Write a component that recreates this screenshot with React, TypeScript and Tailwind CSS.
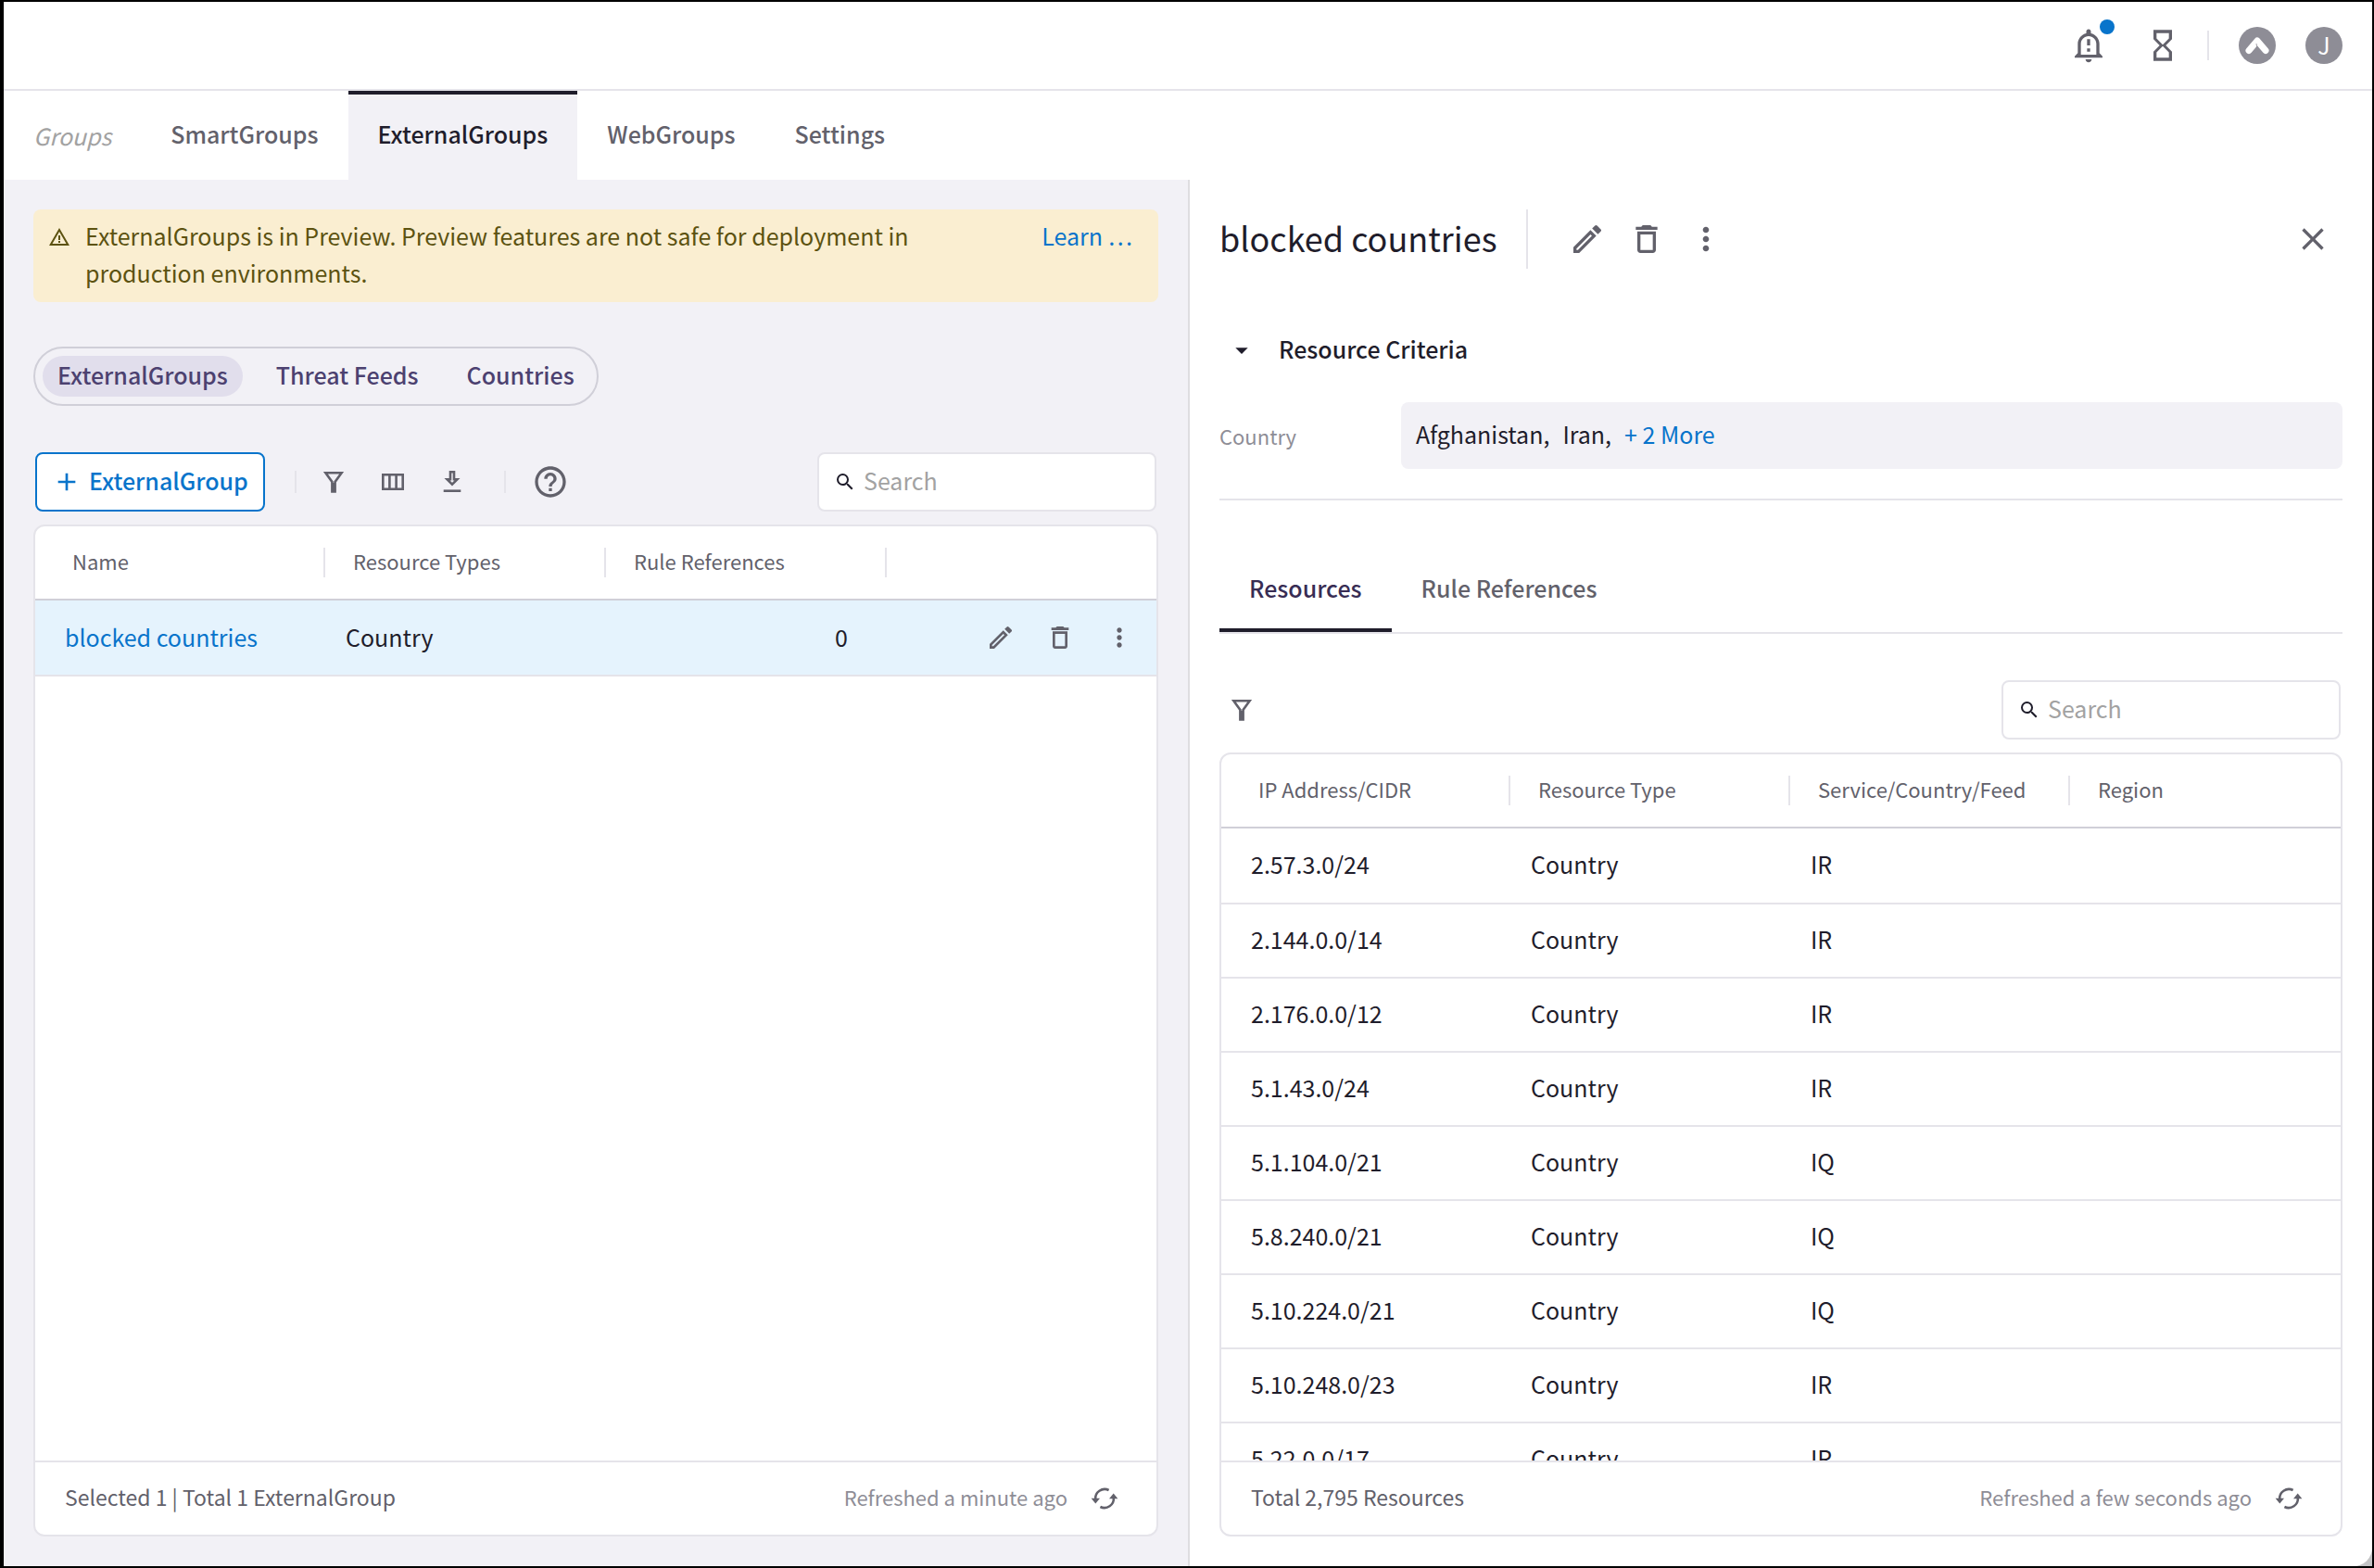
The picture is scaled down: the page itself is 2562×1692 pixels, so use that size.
import React from 'react';
import {
  MdAdd,
  MdArrowDropDown,
  MdClose,
  MdDeleteOutline,
  MdHelpOutline,
  MdHourglassEmpty,
  MdMoreVert,
  MdOutlineModeEdit,
  MdOutlineNotificationImportant,
  MdSearch,
  MdWarningAmber,
} from 'react-icons/md';

const resources = [
  { cidr: '2.57.3.0/24', type: 'Country', feed: 'IR' },
  { cidr: '2.144.0.0/14', type: 'Country', feed: 'IR' },
  { cidr: '2.176.0.0/12', type: 'Country', feed: 'IR' },
  { cidr: '5.1.43.0/24', type: 'Country', feed: 'IR' },
  { cidr: '5.1.104.0/21', type: 'Country', feed: 'IQ' },
  { cidr: '5.8.240.0/21', type: 'Country', feed: 'IQ' },
  { cidr: '5.10.224.0/21', type: 'Country', feed: 'IQ' },
  { cidr: '5.10.248.0/23', type: 'Country', feed: 'IR' },
  { cidr: '5.22.0.0/17', type: 'Country', feed: 'IR' },
];

const FilterIcon = () => (
  <svg viewBox="0 0 32 32" className="size-8" fill="none" stroke="currentColor" strokeWidth="2.6">
    <path d="M7.4 6.3h17.2L17.6 16v10.4h-3.2V16z" />
    <path d="M16 17v9" />
  </svg>
);

const ColumnsIcon = () => (
  <svg viewBox="0 0 32 32" className="size-8" fill="none" stroke="currentColor" strokeWidth="2.6">
    <path d="M5.3 8.3h21.4v15.4H5.3zM12.4 8.3v15.4M19.6 8.3v15.4" />
  </svg>
);

const DownloadIcon = () => (
  <svg viewBox="0 0 32 32" className="size-8" fill="none" stroke="currentColor" strokeWidth="2.6">
    <path d="M14 5.3h4v8h3.4L16 18.7l-5.4-5.4H14z" />
    <path d="M6.7 25.7h18.6" />
  </svg>
);

const RefreshIcon = () => (
  <svg viewBox="0 0 32 32" className="size-8" fill="none" stroke="currentColor" strokeWidth="2.6">
    <path d="M20.6 7A10 10 0 0 0 6.2 17" />
    <path d="M11.4 25A10 10 0 0 0 25.8 15" />
    <path d="M1.600 15.800h9.400l-4.700 5.600zM30.400 16.200H21l4.700-5.600z" fill="currentColor" stroke="none" />
  </svg>
);

const LogoIcon = () => (
  <svg viewBox="0 0 40 40" className="size-10">
    <circle cx="20" cy="20" r="20" fill="#8e8d96" />
    <path d="M11 25.5l9-10.5 9 10.5" fill="none" stroke="#fff" strokeWidth="7" strokeLinecap="round" strokeLinejoin="round" />
    <path d="M19 18l1 5" stroke="#8e8d96" strokeWidth="0.8" />
  </svg>
);

const IconButton = ({ label, children }: { label: string; children: React.ReactNode }) => (
  <button type="button" aria-label={label} className="flex size-16 items-center justify-center text-[#62616b]">
    {children}
  </button>
);

const SearchBox = ({ id }: { id: string }) => (
  <div className="mr-0.5 flex h-16 w-[366px] items-center gap-2 rounded-lg border-2 border-[#e5e4ea] bg-white pl-4">
    <label htmlFor={id} aria-label="Search">
      <MdSearch className="size-6 text-[#1f1d2b]" />
    </label>
    <input id={id} type="text" placeholder="Search" className="min-w-0 flex-1 pb-1 outline-none placeholder:text-[#a2a2a2]" />
  </div>
);

const HeaderCell = ({ first, children }: { first?: boolean; children?: React.ReactNode }) => (
  <th scope="col" className="h-[79px] p-0 text-left text-[22px] font-normal text-[#62616b]">
    <div className={first ? 'flex h-8 items-center pb-1 pl-10' : 'ml-2 flex h-8 items-center border-l-2 border-[#e5e4ea] pb-1 pl-[30px]'}>
      {children}
    </div>
  </th>
);

const Footer = ({ summary, refreshed }: { summary: string; refreshed: string }) => (
  <footer className="flex h-20 shrink-0 items-center border-t-2 border-[#e5e4ea] pl-8 pr-10 text-[#62616b]">
    <span className="pb-1 text-[23px]">{summary}</span>
    <span className="ml-auto pb-1 text-[22px] text-[#8e8d96]">{refreshed}</span>
    <button type="button" aria-label="Refresh" className="ml-6 flex size-8 items-center justify-center">
      <RefreshIcon />
    </button>
  </footer>
);

const TopBar = () => (
  <header className="flex h-24 shrink-0 items-center justify-end border-b-2 border-[#e5e4ea] pr-8 text-[#62616b]">
    <button type="button" aria-label="Notifications" className="relative mr-10 flex size-10 items-center justify-center">
      <MdOutlineNotificationImportant className="size-10" />
      <span className="absolute -right-2 -top-2 size-4 rounded-full bg-[#0874cb]" />
    </button>
    <button type="button" aria-label="Tasks" className="mr-7 flex size-10 items-center justify-center">
      <MdHourglassEmpty className="size-10" />
    </button>
    <span className="mr-8 h-8 w-0.5 bg-[#e5e4ea]" />
    <button type="button" aria-label="Products" className="mr-8">
      <LogoIcon />
    </button>
    <button type="button" className="flex size-10 items-center justify-center rounded-full bg-[#8e8d96] pb-0.5 text-[25px] text-white">
      J
    </button>
  </header>
);

const GroupTabs = () => (
  <nav className="flex h-24 shrink-0 items-stretch font-medium text-[#62616b]">
    <span className="flex items-center px-8 font-normal italic text-[#a2a2a2]">Groups</span>
    <a href="#smart" className="flex items-center px-8 pb-1">SmartGroups</a>
    <a href="#external" className="flex items-center border-t-4 border-[#1f1d2b] bg-[#f2f1f6] px-8 pb-2 text-[#1f1d2b]">
      ExternalGroups
    </a>
    <a href="#web" className="flex items-center px-8 pb-1">WebGroups</a>
    <a href="#settings" className="flex items-center px-8 pb-1">Settings</a>
  </nav>
);

const GroupsPanel = () => (
  <section className="flex w-[calc(50%+2px)] shrink-0 flex-col border-r-2 border-[#dedde0] bg-[#f2f1f6] p-8">
    <div className="flex h-[100px] shrink-0 rounded-lg bg-[#faeed1] pl-4 pr-7 pt-2 leading-10 text-[#5c5210]">
      <MdWarningAmber className="mr-4 mt-2.5 size-6 shrink-0" />
      <p className="w-[920px]">
        ExternalGroups is in Preview. Preview features are not safe for deployment in production environments.
      </p>
      <a href="#learn" className="ml-auto whitespace-nowrap text-[#0874cb]">Learn …</a>
    </div>

    <div className="mt-12 flex h-16 shrink-0 items-center gap-5 self-start rounded-full border-2 border-[#d0cfd8] px-2 font-medium text-[#4c4170]">
      <button type="button" className="h-11 rounded-full bg-[#e1deec] px-4 pb-1">ExternalGroups</button>
      <button type="button" className="h-11 px-4 pb-1">Threat Feeds</button>
      <button type="button" className="h-11 px-4 pb-1">Countries</button>
    </div>

    <div className="mt-[50px] flex shrink-0 items-center">
      <button
        type="button"
        className="ml-0.5 flex h-16 items-center gap-2 rounded-lg border-2 border-[#0874cb] bg-white px-4 font-medium text-[#0874cb]"
      >
        <MdAdd className="size-8" />
        <span className="pb-1">ExternalGroup</span>
      </button>
      <span className="ml-8 mr-2 h-6 w-0.5 bg-[#e5e4ea]" />
      <IconButton label="Filter"><FilterIcon /></IconButton>
      <IconButton label="Columns"><ColumnsIcon /></IconButton>
      <IconButton label="Download"><DownloadIcon /></IconButton>
      <span className="ml-6 mr-4 h-6 w-0.5 bg-[#e5e4ea]" />
      <IconButton label="Help"><MdHelpOutline className="size-10" /></IconButton>
      <div className="ml-auto">
        <SearchBox id="group-search" />
      </div>
    </div>

    <div className="mt-3.5 flex min-h-0 flex-1 flex-col overflow-hidden rounded-xl border-2 border-[#e5e4ea] bg-white">
      <div className="min-h-0 flex-1 overflow-y-auto [scrollbar-width:none]">
        <table className="w-full table-fixed border-collapse">
          <colgroup>
            <col className="w-[303px]" />
            <col className="w-[303px]" />
            <col className="w-[303px]" />
            <col />
          </colgroup>
          <thead>
            <tr className="border-b-2 border-[#d0cfd8]">
              <HeaderCell first>Name</HeaderCell>
              <HeaderCell>Resource Types</HeaderCell>
              <HeaderCell>Rule References</HeaderCell>
              <HeaderCell />
            </tr>
          </thead>
          <tbody>
            <tr className="h-[82px] border-b-2 border-[#e5e4ea] bg-[#e5f3fd]">
              <td className="p-0 pb-0.5 pl-8">
                <a href="#blocked" className="text-[#0874cb]">blocked countries</a>
              </td>
              <td className="p-0 pb-0.5 pl-8">Country</td>
              <td className="p-0 pb-0.5 pr-8 text-right">0</td>
              <td className="p-0">
                <div className="flex justify-end pr-2">
                  <IconButton label="Edit"><MdOutlineModeEdit className="size-8" /></IconButton>
                  <IconButton label="Delete"><MdDeleteOutline className="size-8" /></IconButton>
                  <IconButton label="More"><MdMoreVert className="size-8" /></IconButton>
                </div>
              </td>
            </tr>
          </tbody>
        </table>
      </div>
      <Footer summary="Selected 1 | Total 1 ExternalGroup" refreshed="Refreshed a minute ago" />
    </div>
  </section>
);

const DetailPanel = () => (
  <section className="flex min-w-0 flex-1 flex-col p-8">
    <div className="flex h-16 shrink-0 items-center">
      <h1 className="border-r-2 border-[#e5e4ea] pb-1 pr-8 text-[36px] leading-[60px]">blocked countries</h1>
      <div className="ml-8 flex">
        <IconButton label="Edit"><MdOutlineModeEdit className="size-10" /></IconButton>
        <IconButton label="Delete"><MdDeleteOutline className="size-10" /></IconButton>
        <IconButton label="More"><MdMoreVert className="size-10" /></IconButton>
      </div>
      <div className="ml-auto">
        <IconButton label="Close"><MdClose className="size-10" /></IconButton>
      </div>
    </div>

    <button type="button" className="mt-16 flex h-12 shrink-0 items-center gap-6 pl-2 font-medium">
      <MdArrowDropDown className="size-8" />
      <span className="pb-1">Resource Criteria</span>
    </button>

    <dl className="mt-8 flex shrink-0 items-center border-b-2 border-[#e5e4ea] pb-8">
      <dt className="w-[196px] text-[22px] text-[#8e8d96]">Country</dt>
      <dd className="flex h-[72px] flex-1 items-center gap-3.5 rounded-lg bg-[#f2f1f6] pb-1 pl-4">
        <span>Afghanistan,</span>
        <span>Iran,</span>
        <a href="#more" className="text-[#0874cb]">+ 2 More</a>
      </dd>
    </dl>

    <div className="mt-12 flex h-24 shrink-0 border-b-2 border-[#e5e4ea] font-medium text-[#62616b]">
      <button type="button" className="border-b-4 border-[#1f1d2b] px-8 pt-0.5 text-[#382d54]">Resources</button>
      <button type="button" className="px-8 pb-0.5">Rule References</button>
    </div>

    <div className="mt-[50px] flex h-16 shrink-0 items-center justify-between">
      <div className="-ml-2">
        <IconButton label="Filter resources"><FilterIcon /></IconButton>
      </div>
      <SearchBox id="resource-search" />
    </div>

    <div className="mt-3.5 flex min-h-0 flex-1 flex-col overflow-hidden rounded-xl border-2 border-[#e5e4ea]">
      <div className="min-h-0 flex-1 overflow-y-auto [scrollbar-width:none]">
        <table className="w-full table-fixed border-collapse">
          <thead>
            <tr className="border-b-2 border-[#d0cfd8]">
              <HeaderCell first>IP Address/CIDR</HeaderCell>
              <HeaderCell>Resource Type</HeaderCell>
              <HeaderCell>Service/Country/Feed</HeaderCell>
              <HeaderCell>Region</HeaderCell>
            </tr>
          </thead>
          <tbody>
            {resources.map((row) => (
              <tr key={row.cidr} className="h-20 border-b-2 border-[#e5e4ea] first:h-[82px]">
                <td className="p-0 pb-1 pl-8">{row.cidr}</td>
                <td className="p-0 pb-1 pl-8">{row.type}</td>
                <td className="p-0 pb-1 pl-8">{row.feed}</td>
                <td />
              </tr>
            ))}
          </tbody>
        </table>
      </div>
      <Footer summary="Total 2,795 Resources" refreshed="Refreshed a few seconds ago" />
    </div>
  </section>
);

export default function App() {
  return (
    <div className="h-screen border-y-2 border-l-4 border-r-2 border-black bg-[#c4c4c6] font-['Noto_Sans_CJK_SC',sans-serif] text-[25px] leading-9 text-[#1f1d2b]">
      <div className="flex h-full flex-col overflow-hidden rounded-br-[20px] bg-white">
        <TopBar />
        <GroupTabs />
        <main className="flex min-h-0 flex-1">
          <GroupsPanel />
          <DetailPanel />
        </main>
      </div>
    </div>
  );
}
